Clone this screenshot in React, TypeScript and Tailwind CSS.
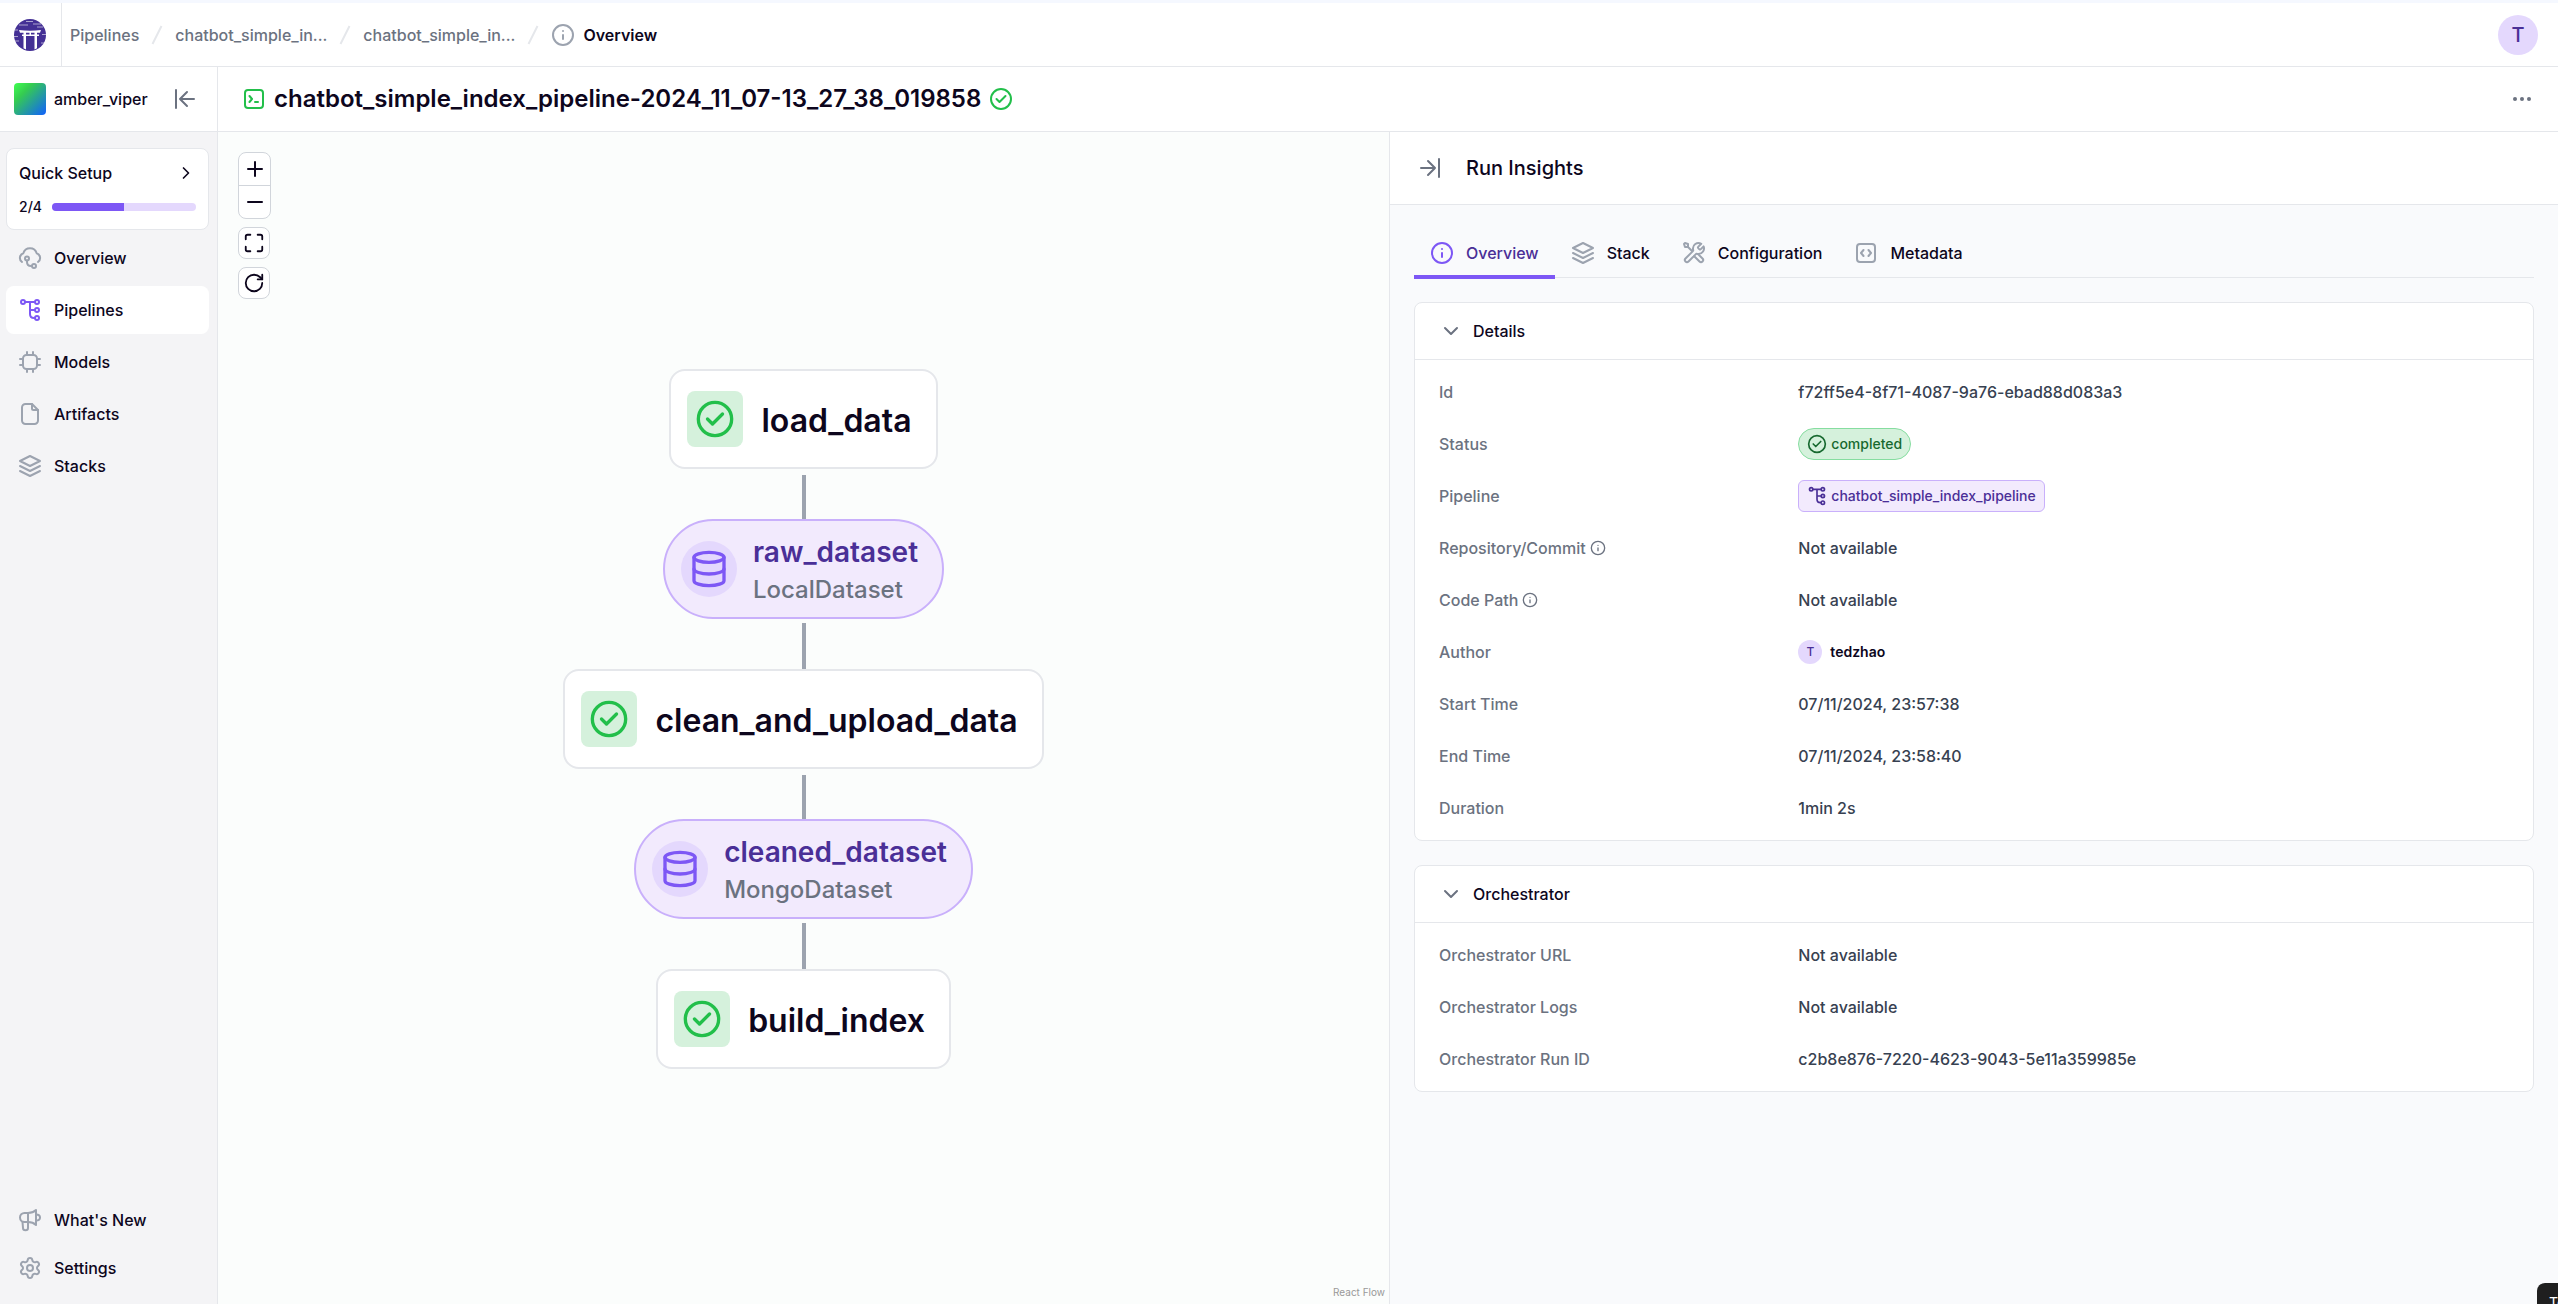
import type { ReactNode } from "react";
import { ChevronDown, ChevronRight, Database, Maximize, Minus, Plus, RotateCw, Settings } from "lucide-react";

type IconProps = { className?: string };

function Svg({ className = "size-6", children }: { className?: string; children: ReactNode }) {
  return (
    <svg
      viewBox="0 0 24 24"
      fill="none"
      stroke="currentColor"
      strokeWidth="2"
      strokeLinecap="round"
      strokeLinejoin="round"
      aria-hidden="true"
      className={`${className} shrink-0`}
    >
      {children}
    </svg>
  );
}

const InfoIcon = ({ className }: IconProps) => (
  <Svg className={className}>
    <circle cx="12" cy="12" r="10" />
    <path d="M12 16v-4M12 8h.01" />
  </Svg>
);

const CheckIcon = ({ className }: IconProps) => (
  <Svg className={className}>
    <circle cx="12" cy="12" r="10" />
    <path d="m7.5 12 3 3 6-6" />
  </Svg>
);

const TerminalIcon = ({ className }: IconProps) => (
  <Svg className={className}>
    <rect x="3" y="3" width="18" height="18" rx="3" />
    <path d="m7.5 9 2.5 3-2.5 3M13 15h3" />
  </Svg>
);

const CodeIcon = ({ className }: IconProps) => (
  <Svg className={className}>
    <rect x="3" y="3" width="18" height="18" rx="3" />
    <path d="m9.500 9-2.500 3 2.500 3M14.500 9l2.500 3-2.500 3" />
  </Svg>
);

const PipelineIcon = ({ className }: IconProps) => (
  <Svg className={className}>
    <circle cx="5" cy="4" r="2" />
    <circle cx="19" cy="4" r="2" />
    <circle cx="19" cy="12" r="2" />
    <circle cx="19" cy="20" r="2" />
    <path d="M7 4h10M12 4v12c0 2.500 1.500 4 4 4h1M12 12h5" />
  </Svg>
);

const CloudIcon = ({ className }: IconProps) => (
  <Svg className={className}>
    <path d="M4 16A5 5 0 0 1 5.300 7.200 7 7 0 0 1 18.700 7.200 5 5 0 0 1 20 16" />
    <circle cx="9" cy="12.500" r="2" />
    <circle cx="16" cy="20" r="2" />
    <path d="M9 14.500V16c0 2.500 1.500 4 4 4h1" />
  </Svg>
);

const ChipIcon = ({ className }: IconProps) => (
  <Svg className={className}>
    <rect x="5" y="5" width="14" height="14" rx="3.500" />
    <path d="M9 2v3M15 2v3M9 19v3M15 19v3M2 9h3M2 15h3M19 9h3M19 15h3" />
  </Svg>
);

const FileIcon = ({ className }: IconProps) => (
  <Svg className={className}>
    <path d="M14 2H7.500A3.500 3.500 0 0 0 4 5.500v13A3.500 3.500 0 0 0 7.500 22h9a3.500 3.500 0 0 0 3.500-3.500V8z" />
    <path d="M14 2v4.500A1.500 1.500 0 0 0 15.500 8H20" />
  </Svg>
);

const LayersIcon = ({ className }: IconProps) => (
  <Svg className={className}>
    <path d="M12 2 2 7l10 5 10-5zM2 12l10 5 10-5M2 17l10 5 10-5" />
  </Svg>
);

const MegaphoneIcon = ({ className }: IconProps) => (
  <Svg className={className}>
    <path d="M10 5H6.500a4.500 4.500 0 0 0 0 9H10c3 0 6 1 8 3V2c-2 2-5 3-8 3z" />
    <path d="M4.500 14 5 20a2.500 2.200 0 0 0 5 0V5M18 6.500c2.400 0 4 1.300 4 3s-1.600 3-4 3" />
  </Svg>
);

const ToolsIcon = ({ className }: IconProps) => (
  <Svg className={className}>
    <path d="M6 6l4.500 4.500M6 6H3L2 3l1-1 3 1v3zM19.259 2.741l-2.628 2.628c-.396.396-.594.594-.668.822a1 1 0 0 0 0 .618c.074.228.272.426.668.822l.238.238c.396.396.594.594.822.668a1 1 0 0 0 .618 0c.228-.074.426-.272.822-.668l2.458-2.458A5.500 5.500 0 0 1 16.500 13c-.366 0-.724-.036-1.070-.104-.486-.096-.730-.144-.877-.129-.157.015-.234.039-.373.113-.130.070-.261.201-.523.463L6.500 20.500a2.121 2.121 0 0 1-3-3l7.157-7.157c.262-.262.393-.393.463-.523.074-.139.098-.216.113-.373.015-.147-.033-.391-.129-.877A5.500 5.500 0 0 1 19.259 2.741zM12 15l5.500 5.500a2.121 2.121 0 0 0 3-3l-4.525-4.525" />
  </Svg>
);

const CollapseLeftIcon = ({ className }: IconProps) => (
  <Svg className={className}>
    <path d="M3 3v18M21 12H7M14 5l-7 7 7 7" />
  </Svg>
);

const CollapseRightIcon = ({ className }: IconProps) => (
  <Svg className={className}>
    <path d="M21 3v18M3 12h14M10 5l7 7-7 7" />
  </Svg>
);

function Logo() {
  return (
    <svg viewBox="0 0 32 32" className="size-8" role="img" aria-label="Home">
      <circle cx="16" cy="16" r="16" fill="#443095" />
      <g stroke="#fff" strokeWidth="0.800" opacity="0.700">
        <path d="M12 2.500h7M5 6h9M19 5h8M23 8h6M1 11h3M0 17.500h4M28 15.500h4M1 22h4M27 24h3" />
      </g>
      <path
        fill="#fff"
        d="M5 11q11 1.500 22 0l-1 2.800H6zM8 15.500h17V17H8zM9.500 13.500H12v17l-2.500-1.200zM20.500 13.500H23v15.800l-2.500 1.200zM15.500 13.500H17v2.500h-1.500z"
      />
    </svg>
  );
}

const Slash = () => (
  <svg viewBox="0 0 12 20" className="h-5 w-3 shrink-0" aria-hidden="true">
    <path d="M10.500 1 1.500 19" stroke="#e5e7eb" strokeWidth="2" />
  </svg>
);

function Header() {
  return (
    <header className="flex h-16 shrink-0 items-center border-b border-[#e5e7eb] bg-white">
      <a href="#home" className="flex h-full w-[62px] shrink-0 items-center border-r border-[#e5e7eb] pl-3.5">
        <Logo />
      </a>
      <nav aria-label="Breadcrumb" className="flex items-center gap-3 pl-2 font-medium text-[#6b7280]">
        <a href="#pipelines">Pipelines</a>
        <Slash />
        <a href="#pipeline">chatbot_simple_in...</a>
        <Slash />
        <a href="#run">chatbot_simple_in...</a>
        <Slash />
        <span className="flex items-center gap-2 font-semibold text-[#0d061d]" aria-current="page">
          <InfoIcon className="size-6 text-[#9ca3af]" />
          Overview
        </span>
      </nav>
      <button className="mr-5 ml-auto size-10 rounded-full bg-[#e4d8fd] text-xl font-medium text-[#4a2f97]">T</button>
    </header>
  );
}

const mainNav = [
  { label: "Overview", Icon: CloudIcon },
  { label: "Pipelines", Icon: PipelineIcon, active: true },
  { label: "Models", Icon: ChipIcon },
  { label: "Artifacts", Icon: FileIcon },
  { label: "Stacks", Icon: LayersIcon },
];

function Sidebar() {
  return (
    <aside className="flex w-[218px] shrink-0 flex-col border-r border-[#e5e7eb] bg-[#f4f4f6] font-medium text-[#0d061d]">
      <div className="flex h-[65px] shrink-0 items-center border-b border-[#e5e7eb] bg-white pr-5 pl-3.5">
        <div className="size-8 rounded bg-[linear-gradient(135deg,#40ff50_0%,#35cc50_30%,#1060ff_100%)]" />
        <span className="ml-2">amber_viper</span>
        <button aria-label="Collapse sidebar" className="ml-auto text-[#6b7280]">
          <CollapseLeftIcon />
        </button>
      </div>
      <div className="flex flex-1 flex-col px-2 pt-4 pb-3 pl-1.5">
        <a href="#setup" className="mb-1 block rounded-lg border border-[#e5e7eb] bg-white px-3 pt-3 pb-2.5">
          <span className="flex h-6 items-center justify-between">
            Quick Setup
            <ChevronRight className="size-5" />
          </span>
          <span className="mt-2.5 flex h-6 items-center gap-2.5 text-sm">
            2/4
            <span className="h-2 flex-1 overflow-hidden rounded bg-[#e4d8fd]">
              <span className="block h-full w-1/2 bg-[#7d57f5]" />
            </span>
          </span>
        </a>
        <nav className="flex flex-col gap-1">
          {mainNav.map(({ label, Icon, active }) => (
            <a
              key={label}
              href={`#${label}`}
              className={`flex h-12 items-center gap-3 rounded-lg px-3 ${active ? "bg-white" : ""}`}
            >
              <Icon className={`size-6 ${active ? "text-[#7d57f5]" : "text-[#9ca3af]"}`} />
              {label}
            </a>
          ))}
        </nav>
        <nav className="mt-auto flex flex-col">
          <a href="#news" className="flex h-12 items-center gap-3 px-3">
            <MegaphoneIcon className="size-6 text-[#9ca3af]" />
            What's New
          </a>
          <a href="#settings" className="flex h-12 items-center gap-3 px-3">
            <Settings className="size-6 text-[#9ca3af]" />
            Settings
          </a>
        </nav>
      </div>
    </aside>
  );
}

function StepNode({ name }: { name: string }) {
  return (
    <div className="flex h-[100px] items-center gap-[18px] rounded-2xl border-2 border-[#e5e7eb] bg-white pr-6 pl-4">
      <span className="flex size-14 items-center justify-center rounded-lg bg-[#d5f1dc] text-[#22bf4a]">
        <CheckIcon className="size-10" />
      </span>
      <span className="pt-1 text-[32px] font-semibold text-[#0d061d]">{name}</span>
    </div>
  );
}

function DatasetNode({ name, kind }: { name: string; kind: string }) {
  return (
    <div className="flex h-[100px] items-center gap-4 rounded-full border-2 border-[#c9b0fb] bg-[#f2eafd] pr-6 pl-4">
      <span className="flex size-14 items-center justify-center rounded-full bg-[#e4d8fd] text-[#7d57f5]">
        <Database className="size-10" />
      </span>
      <span className="flex flex-col pt-1">
        <span className="text-[28px] leading-[38px] font-semibold text-[#4a2f97]">{name}</span>
        <span className="text-2xl leading-[38px] font-medium text-[#6b7280]">{kind}</span>
      </span>
    </div>
  );
}

const StepEdge = () => <div className="mt-1.5 h-11 w-1 bg-[#9ca3af]" />;
const DatasetEdge = () => <div className="mt-1 h-[46px] w-1 bg-[#9ca3af]" />;

const controlBox = "flex flex-col overflow-hidden rounded-lg border border-[#d1d5db] bg-white";

function Canvas() {
  return (
    <section
      aria-label="Pipeline graph"
      className="relative flex flex-1 flex-col items-center justify-center bg-[#fbfdfc] pt-0.5"
    >
      <div className="absolute top-5 left-5 flex flex-col gap-2 text-[#0d061d]">
        <div className={controlBox}>
          <button aria-label="Zoom in" className="flex h-8 w-[31px] items-center justify-center">
            <Plus className="size-6" />
          </button>
          <button aria-label="Zoom out" className="flex h-[33px] w-[31px] items-center justify-center border-t border-[#d1d5db]">
            <Minus className="size-6" />
          </button>
        </div>
        <button aria-label="Fit view" className={`${controlBox} size-8 items-center justify-center`}>
          <Maximize className="size-[22px]" />
        </button>
        <button aria-label="Refresh" className={`${controlBox} size-8 items-center justify-center`}>
          <RotateCw className="size-[22px]" />
        </button>
      </div>
      <StepNode name="load_data" />
      <StepEdge />
      <DatasetNode name="raw_dataset" kind="LocalDataset" />
      <DatasetEdge />
      <StepNode name="clean_and_upload_data" />
      <StepEdge />
      <DatasetNode name="cleaned_dataset" kind="MongoDataset" />
      <DatasetEdge />
      <StepNode name="build_index" />
      <a href="#reactflow" className="absolute right-1 bottom-1 text-[10px] leading-[15px] text-[#999]">
        React Flow
      </a>
    </section>
  );
}

const tabs = [
  { label: "Overview", Icon: InfoIcon, active: true },
  { label: "Stack", Icon: LayersIcon },
  { label: "Configuration", Icon: ToolsIcon },
  { label: "Metadata", Icon: CodeIcon },
];

function Card({ title, children }: { title: string; children: ReactNode }) {
  return (
    <section className="mb-6 rounded-lg border border-[#e5e7eb] bg-white">
      <h3 className="border-b border-[#e5e7eb]">
        <button className="flex h-14 w-full items-center gap-2.5 px-6 font-medium text-[#0d061d]">
          <ChevronDown className="size-6 text-[#6b7280]" />
          {title}
        </button>
      </h3>
      <dl className="py-1.5">{children}</dl>
    </section>
  );
}

function Field({ label, hint, children }: { label: string; hint?: boolean; children: ReactNode }) {
  return (
    <div className="grid h-[52px] grid-cols-3 items-center gap-2 px-6">
      <dt className="flex items-center gap-1 text-[#6b7280]">
        {label}
        {hint && <InfoIcon className="size-4" />}
      </dt>
      <dd className="col-span-2 flex items-center text-[#374151]">{children}</dd>
    </div>
  );
}

function Insights() {
  return (
    <aside
      aria-label="Run insights"
      className="flex w-[calc(50%-1px)] shrink-0 flex-col border-l border-[#e5e7eb] bg-[#f9fafc] font-medium"
    >
      <div className="flex h-[73px] shrink-0 items-center gap-6 border-b border-[#e5e7eb] bg-white px-7 text-xl text-[#0d061d]">
        <button aria-label="Close panel" className="text-[#6b7280]">
          <CollapseRightIcon />
        </button>
        <h2>Run Insights</h2>
      </div>
      <div className="px-6 pt-6">
        <div role="tablist" className="mb-6 flex border-b border-[#e5e7eb]">
          {tabs.map(({ label, Icon, active }) => (
            <button
              key={label}
              role="tab"
              aria-selected={!!active}
              className={`-mb-0.5 flex h-[50px] items-center gap-3 border-b-4 px-4 pt-0.5 ${
                active ? "border-[#7d57f5] text-[#4a2f97]" : "border-transparent text-[#0d061d]"
              }`}
            >
              <Icon className={`size-6 ${active ? "text-[#7d57f5]" : "text-[#9ca3af]"}`} />
              {label}
            </button>
          ))}
        </div>
        <Card title="Details">
          <Field label="Id">f72ff5e4-8f71-4087-9a76-ebad88d083a3</Field>
          <Field label="Status">
            <span className="flex h-8 items-center gap-1 rounded-full border border-[#86dda0] bg-[#d5f1dc] px-2 text-sm text-[#17692f]">
              <CheckIcon className="size-5" />
              completed
            </span>
          </Field>
          <Field label="Pipeline">
            <a
              href="#pipeline"
              className="flex h-8 items-center gap-1 rounded-md border border-[#c9b0fb] bg-[#f2eafd] px-2 text-sm text-[#4a2f97]"
            >
              <PipelineIcon className="size-5" />
              chatbot_simple_index_pipeline
            </a>
          </Field>
          <Field label="Repository/Commit" hint>Not available</Field>
          <Field label="Code Path" hint>Not available</Field>
          <Field label="Author">
            <span className="flex items-center gap-2 text-sm font-semibold text-[#0d061d]">
              <span className="flex size-6 items-center justify-center rounded-full bg-[#e4d8fd] text-xs font-medium text-[#4a2f97]">T</span>
              tedzhao
            </span>
          </Field>
          <Field label="Start Time">07/11/2024, 23:57:38</Field>
          <Field label="End Time">07/11/2024, 23:58:40</Field>
          <Field label="Duration">1min 2s</Field>
        </Card>
        <Card title="Orchestrator">
          <Field label="Orchestrator URL">Not available</Field>
          <Field label="Orchestrator Logs">Not available</Field>
          <Field label="Orchestrator Run ID">c2b8e876-7220-4623-9043-5e11a359985e</Field>
        </Card>
      </div>
    </aside>
  );
}

export default function App() {
  return (
    <div className="relative flex h-screen flex-col overflow-hidden border-t-[3px] border-[#f5f8ff] font-['Inter',sans-serif] text-base">
      <Header />
      <div className="flex min-h-0 flex-1">
        <Sidebar />
        <main className="flex min-w-0 flex-1 flex-col">
          <div className="flex h-[65px] shrink-0 items-center border-b border-[#e5e7eb] bg-white px-6">
            <TerminalIcon className="size-6 text-[#22bf4a]" />
            <h1 className="mr-2 ml-2 text-2xl font-semibold text-[#0d061d]">
              chatbot_simple_index_pipeline-2024_11_07-13_27_38_019858
            </h1>
            <CheckIcon className="size-6 text-[#22bf4a]" />
            <button aria-label="More actions" className="ml-auto text-[#6b7280]">
              <svg viewBox="0 0 24 24" className="size-6" fill="currentColor" aria-hidden="true">
                <circle cx="5" cy="12" r="2" />
                <circle cx="12" cy="12" r="2" />
                <circle cx="19" cy="12" r="2" />
              </svg>
            </button>
          </div>
          <div className="flex min-h-0 flex-1">
            <Canvas />
            <Insights />
          </div>
        </main>
      </div>
      <div className="absolute right-0 bottom-0 h-[21px] w-[21px] overflow-hidden rounded-tl-lg bg-[#1f1f1f] pt-2.5 pl-3 text-sm text-white shadow-2xl">
        Te
      </div>
    </div>
  );
}
